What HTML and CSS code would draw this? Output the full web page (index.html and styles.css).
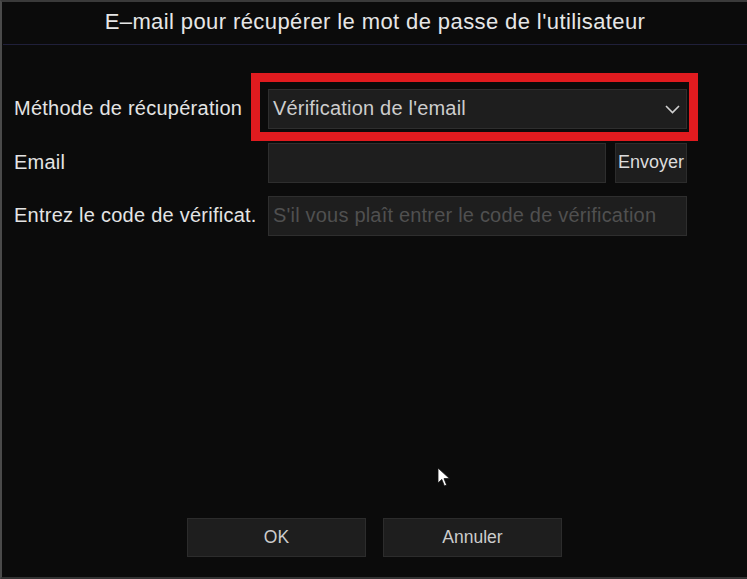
FILE: index.html
```html
<!DOCTYPE html>
<html lang="fr">
<head>
    <meta charset="UTF-8">
    <meta name="viewport" content="width=device-width, initial-scale=1.0">
    <title>E-mail pour récupérer le mot de passe</title>
    <link rel="stylesheet" href="styles.css">
</head>
<body>
    <div class="dialog">
        <div class="dialog-title">E–mail pour récupérer le mot de passe de l'utilisateur</div>

        <div class="form">
            <label class="label">Méthode de récupération</label>
            <div class="field select-wrap">
                <div class="select">
                    <span>Vérification de l'email</span>
                    <svg class="chevron" width="15" height="9" viewBox="0 0 15 9">
                        <path d="M1 1 L7.5 7.5 L14 1" fill="none" stroke="#d0d0d0" stroke-width="1.6"/>
                    </svg>
                </div>
                <div class="highlight"></div>
            </div>

            <label class="label">Email</label>
            <div class="field email-row">
                <input type="text" class="input">
                <button class="btn-send">Envoyer</button>
            </div>

            <label class="label">Entrez le code de vérificat.</label>
            <div class="field">
                <input type="text" class="input" placeholder="S'il vous plaît entrer le code de vérification">
            </div>
        </div>

        <div class="footer">
            <button class="btn">OK</button>
            <button class="btn">Annuler</button>
        </div>

        <!-- pointeur de la souris -->
        <svg class="cursor" width="15" height="20" viewBox="0 0 15 20">
            <path d="M1 1 L1 16 L4.8 12.4 L7.4 19 L9.6 18 L7 11.6 L12.5 11.6 Z" fill="#fff" stroke="#111" stroke-width="0.8"/>
        </svg>
    </div>
</body>
</html>
```

FILE: styles.css
```css
body {
    margin: 0;
    background-color: #0b0b0b;
    font-family: "Liberation Sans", Arial, sans-serif;
    color: #e4e4e4;
}
.dialog {
    position: relative;
    height: 579px;
    box-sizing: border-box;
    border-top: 2px solid #3a3a3a;
    border-left: 2px solid #4a4a4a;
    border-bottom: 2px solid #333;
    display: flex;
    flex-direction: column;
}
.dialog-title {
    height: 42px;
    line-height: 40px;
    text-align: center;
    font-size: 22px;
    letter-spacing: 0.4px;
    color: #e6e6e6;
    border-bottom: 1px solid #20203a;
    margin-left: 1px;
}
.form {
    flex: 1;
    display: grid;
    grid-template-columns: 254px 419px;
    grid-auto-rows: 40px;
    row-gap: 13.5px;
    padding: 44px 0 0 12px;
    align-content: start;
}
.label {
    font-size: 20px;
    letter-spacing: 0.25px;
    line-height: 39px;
    color: #e4e4e4;
    white-space: nowrap;
}
.field {
    display: flex;
    gap: 9px;
}
.select-wrap {
    position: relative;
}
.select {
    flex: 1;
    display: flex;
    align-items: center;
    justify-content: space-between;
    padding: 0 6px 1px 4px;
    background: #1e1e1e;
    border: 1px solid #2e2e2e;
    font-size: 20px;
    letter-spacing: 0.2px;
    color: #cdcdcd;
}
.chevron {
    margin-top: 2px;
}
.highlight {
    position: absolute;
    left: -17px;
    top: -16px;
    right: -11px;
    bottom: -12px;
    border: 9px solid #e01b1f;
}
.input {
    flex: 1;
    min-width: 0;
    box-sizing: border-box;
    height: 40px;
    margin: 0;
    padding: 0 4px 1px;
    background: #1e1e1e;
    border: 1px solid #2e2e2e;
    font-family: inherit;
    font-size: 20px;
    letter-spacing: 0.2px;
    color: #cdcdcd;
    outline: none;
}
.input::placeholder {
    color: #505050;
}
.btn-send {
    width: 72px;
    height: 40px;
    padding: 0;
    background: #1e1e1e;
    border: 1px solid #2c2c2c;
    font-family: inherit;
    font-size: 18px;
    color: #dcdcdc;
}
.footer {
    display: flex;
    justify-content: center;
    gap: 17px;
    padding-bottom: 20px;
}
.btn {
    width: 179px;
    height: 39px;
    background: #1e1e1e;
    border: 1px solid #2c2c2c;
    font-family: inherit;
    font-size: 17.5px;
    color: #cccccc;
}
.cursor {
    position: absolute;
    left: 435px;
    top: 465px;
}
```
